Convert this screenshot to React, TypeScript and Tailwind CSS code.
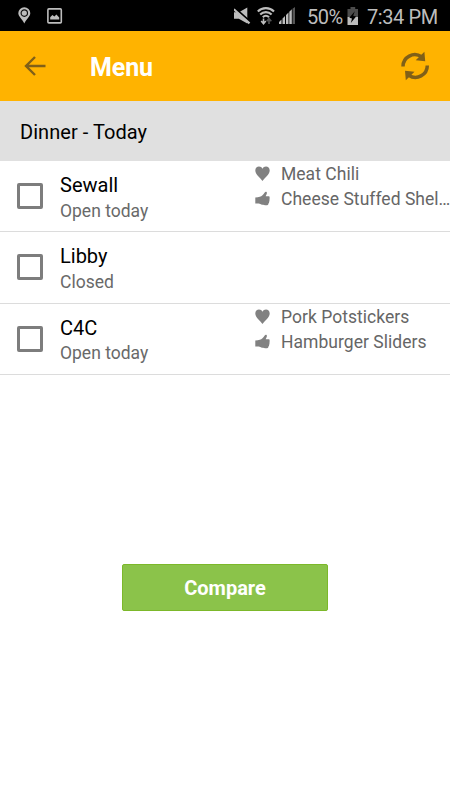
import React from "react";

const halls = [
  { name: "Sewall", status: "Open today", love: "Meat Chili", like: "Cheese Stuffed Shel…" },
  { name: "Libby", status: "Closed" },
  { name: "C4C", status: "Open today", love: "Pork Potstickers", like: "Hamburger Sliders" },
];

const StatusBar = () => {
  return (
    <div className="flex h-[31px] items-center bg-black text-[#bdbdbd]">
      <svg className="ml-[18px]" width="13" height="17" viewBox="0 0 13 17" fill="none">
        <path d="M6.3 0.3a6 6 0 0 0-6 6c0 3 3.6 5.6 6 10.2 2.4-4.6 6-7.2 6-10.2a6 6 0 0 0-6-6z" fill="currentColor" />
        <circle cx="6.3" cy="6.1" r="3.2" fill="#bdbdbd" stroke="#111" strokeWidth="1.2" />
      </svg>
      <svg className="ml-4" width="16" height="16" viewBox="0 0 16 16" fill="none">
        <rect x="0.9" y="0.9" width="13.4" height="14" rx="1" stroke="currentColor" strokeWidth="1.6" />
        <path d="M3.2 11.5V9.3l2.2-2.2 2 1.5 2-2.2 2.8 3v2.1z" fill="currentColor" />
      </svg>
      <svg className="ml-auto" width="18" height="18" viewBox="0 0 18 18">
        <path d="M0 5.3h5L13.3 0.5v15.9L4.8 11.8H0z" fill="currentColor" />
        <path d="M0.8 1L16 14.5" stroke="#000" strokeWidth="2" />
        <path d="M-0.2 2.2L15.5 16.4" stroke="currentColor" strokeWidth="2.2" />
      </svg>
      <svg className="ml-[5px]" width="18" height="18" viewBox="0 0 18 18" fill="none">
        <path d="M0.8 4.5a11.5 11.5 0 0 1 16.2 0M3.2 7.5a8 8 0 0 1 11.4 0M5.8 10.2a4.4 4.4 0 0 1 6.2 0" stroke="currentColor" strokeWidth="2.1" />
        <path d="M6.5 11.5v5M4.2 14l2.3 2.7L8.8 14" stroke="currentColor" strokeWidth="1.6" />
        <path d="M12 17v-5M9.7 14.2l2.3-2.7 2.3 2.7" stroke="#555" strokeWidth="1.6" />
      </svg>
      <svg className="ml-[4px]" width="17" height="18" viewBox="0 0 17 18">
        <path d="M0 17v-2l2.5-2.5V17zM3.5 17v-5.5L6 9v8zM7 17V8l2.5-2.5V17zM10.300 17V4.700l2.500-2.500V17z" fill="currentColor" />
        <path d="M13.5 17V1.8L16 0v17z" fill="#555" />
      </svg>
      <span className="ml-[11px] w-[37px] whitespace-nowrap pt-[3px] text-[20px] leading-[31px] tracking-[-0.5px]">50%</span>
      <svg className="ml-[3px]" width="12" height="18" viewBox="0 0 12 18">
        <path d="M3.5 0h4.7v2H11v8H0.5V2h3z" fill="#4c4c4c" />
        <path d="M0.5 10H11v8H0.5z" fill="currentColor" />
        <path d="M7.8 4.2L2.3 10.8l2.7.7-1.2 4.4 5.3-6.4-2.9-.7z" fill="#000" />
      </svg>
      <span className="ml-2 mr-3 w-[71px] whitespace-nowrap pt-[3px] text-[20px] leading-[31px] tracking-[-0.4px]">7:34 PM</span>
    </div>
  );
};

const Heart = () => {
  return (
    <svg width="15" height="15" viewBox="0 0 15 15" fill="#818181">
      <path d="M7.5 14.9C5.8 12.3 0.3 8.8 0.3 4.5 0.3 1.9 2 .4 4 .4c1.6 0 2.8.9 3.5 2.3C8.2 1.3 9.4.4 11 .4c2 0 3.7 1.5 3.7 4.1C14.7 8.8 9.2 12.3 7.5 14.9z" />
    </svg>
  );
};

const ThumbsUp = () => {
  return (
    <svg width="15" height="15" viewBox="0 0 15 15" fill="#818181">
      <path d="M0.3 6.4c1.8-.2 3.2-.3 4.5-.7 2-.7 3.5-2 4.9-4.300C10.300.4 12 .6 11.900 1.900c-.1 1.300-.9 2.200-1.200 3.300h3c1.100 0 1.300 1.300.7 1.800.5.500.4 1.500-.1 1.900.4.600.3 1.500-.3 1.900.3.700 0 1.500-.6 1.700 0 1-.5 1.700-1.300 1.700-2.700.3-5.200-.1-6.800-1.100-1.300-.6-3.200-.6-5-.5z" />
    </svg>
  );
};

const App = () => {
  return (
    <div className="h-[800px] w-[450px] overflow-hidden bg-white font-['Roboto',sans-serif]">
      <StatusBar />
      <header className="flex h-[70px] items-center bg-[#ffb300]">
        <svg className="ml-6" width="22" height="20" viewBox="0 0 22 20" fill="none" stroke="#806018" strokeWidth="2.4">
          <path d="M21.5 10H2.3M11 1L2 10l9 9" />
        </svg>
        <h1 className="ml-11 pt-[3px] text-[25px] font-bold tracking-[-0.1px] text-white">Menu</h1>
        {/* refresh */}
        <svg className="ml-auto mr-[20px]" width="30" height="30" viewBox="0 0 30 30" fill="none">
          <path d="M3 15.6A11.800 11.800 0 0 1 21.500 5.800M27.300 14.400A11.800 11.800 0 0 1 8.800 24.200" stroke="#806018" strokeWidth="3.5" />
          <path d="M24.4.8l.8 9.400-9.500-.9zM5.800 29.200L5 19.800l9.500.9z" fill="#806018" />
        </svg>
      </header>
      <div className="flex h-[60px] items-center bg-[#e0e0e0] px-5 pt-[2px] text-[20px] tracking-[0.05px] text-black">
        Dinner - Today
      </div>
      <div className="grid grid-rows-[71.33px_71.33px_71.34px]">
        {halls.map((hall) => (
          <div key={hall.name} className="flex border-b border-[#dcdcdc]">
            <div className="ml-[17px] mt-[22px] size-[26px] shrink-0 rounded-[2px] border-3 border-[#7d7d7d]" />
            <div className="ml-[17px] w-[195px] shrink-0 pt-3">
              <p className="text-[20px] leading-[25px] text-black">{hall.name}</p>
              <p className="mt-[0.5px] text-[17.5px] leading-[25px] text-[#696969]">{hall.status}</p>
            </div>
            {hall.love && (
              <div className="min-w-0 flex-1 text-[17.5px] leading-[25px] tracking-[0.03px] text-[#666]">
                <div className="flex items-center gap-[11px]">
                  <Heart />
                  <p className="whitespace-nowrap pt-px -mb-px">{hall.love}</p>
                </div>
                <div className="flex items-center gap-[11px]">
                  <ThumbsUp />
                  <p className="whitespace-nowrap pt-px -mb-px">{hall.like}</p>
                </div>
              </div>
            )}
          </div>
        ))}
      </div>
      <button className="mx-auto mt-[189px] block h-[47px] w-[206px] rounded-[2px] border border-[#7cb82a] bg-[#8bc34a] pt-[2px] text-[20px] font-bold text-white">
        Compare
      </button>
    </div>
  );
};

export default App;
